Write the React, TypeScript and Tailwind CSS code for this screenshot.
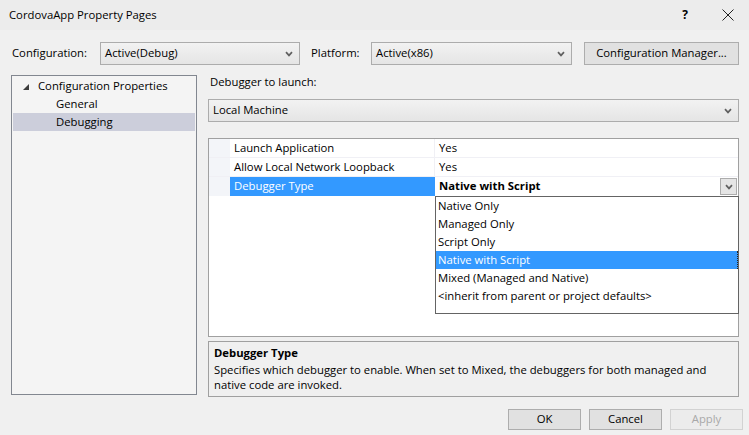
import React from 'react';

const font = { fontFamily: '"Open Sans", "Noto Sans", sans-serif' };

function Chevron({ color = '#606060' }: { color?: string }) {
    return (
        <svg width="8" height="6" viewBox="0 0 8 6">
            <path d="M1 1.2 L4 4.4 L7 1.2" fill="none" stroke={color} strokeWidth="1.7" />
        </svg>
    );
}

function Combo({ value, width }: { value: string; width: string }) {
    return (
        <div
            className={`${width} h-[23px] flex items-center justify-between pl-[4px] pr-[6px] border border-[#acacac] bg-gradient-to-b from-[#f2f2f2] to-[#e5e5e5]`}
        >
            <span>{value}</span>
            <Chevron />
        </div>
    );
}

function Button({ label, disabled = false }: { label: string; disabled?: boolean }) {
    return (
        <div
            className={
                disabled
                    ? 'w-[73px] h-[21px] flex items-center justify-center border border-[#d2d2d2] bg-[#ececec] text-[#a8a8a8]'
                    : 'w-[73px] h-[21px] flex items-center justify-center border border-[#adadad] bg-[#e1e1e1]'
            }
        >
            {label}
        </div>
    );
}

const gridRows = [
    { name: 'Launch Application', value: 'Yes' },
    { name: 'Allow Local Network Loopback', value: 'Yes' },
];

const debuggerOptions = [
    'Native Only',
    'Managed Only',
    'Script Only',
    'Native with Script',
    'Mixed (Managed and Native)',
    '<inherit from parent or project defaults>',
];

export default function App() {
    return (
        <div className="w-[749px] h-[435px] bg-[#f0f0f0] text-[11.3px] text-black flex flex-col overflow-hidden" style={font}>
            {/* Title bar */}
            <div className="h-[30px] bg-[#ececec] flex items-center justify-between pl-[9px]">
                <span>CordovaApp Property Pages</span>
                <div className="flex items-center">
                    <span className="font-bold text-[12px] mr-[34px]">?</span>
                    <svg width="12" height="12" viewBox="0 0 12 12" className="mr-[15px]">
                        <path d="M0.5 0.5 L11.5 11.5 M11.5 0.5 L0.5 11.5" stroke="#222" strokeWidth="1" />
                    </svg>
                </div>
            </div>

            {/* Configuration / platform row */}
            <div className="flex items-center mt-[12px] pl-[12px] h-[23px]">
                <span className="w-[88px]">Configuration:</span>
                <Combo value="Active(Debug)" width="w-[200px]" />
                <span className="ml-[11px] w-[60px]">Platform:</span>
                <Combo value="Active(x86)" width="w-[201px]" />
                <div className="ml-[12px] w-[155px] h-[23px] flex items-center justify-center border border-[#adadad] bg-[#e1e1e1]">
                    Configuration Manager...
                </div>
            </div>

            {/* Main */}
            <div className="flex mt-[10px] pl-[11px]">
                {/* Tree */}
                <div className="w-[186px] h-[320px] border border-[#828790] bg-[#f4f4f4] pt-[1px] px-[1px]">
                    <div className="h-[18px] flex items-center">
                        <svg width="6" height="6" viewBox="0 0 6 6" className="ml-[10px] mr-[9px] mt-[1px]">
                            <path d="M6 0 L6 6 L0 6 Z" fill="#3c3c3c" />
                        </svg>
                        <span>Configuration Properties</span>
                    </div>
                    <div className="h-[18px] flex items-center pl-[43px]">General</div>
                    <div className="h-[18px] flex items-center pl-[43px] bg-[#cccedb]">Debugging</div>
                </div>

                {/* Right column */}
                <div className="ml-[11px] w-[531px] flex flex-col">
                    <div className="h-[14px] flex items-center pl-[2px]">Debugger to launch:</div>
                    <div className="mt-[10px]">
                        <Combo value="Local Machine" width="w-[531px]" />
                    </div>

                    {/* Property grid */}
                    <div className="relative mt-[16px] h-[199px] border border-[#a0a0a0] bg-white">
                        {gridRows.map((row) => (
                            <div key={row.name} className="h-[19px] flex border-b border-[#f0f0f5]">
                                <div className="w-[21px] bg-[#f3f5f9]" />
                                <div className="w-[205px] flex items-center pl-[4px] border-r border-[#f0f0f5]">{row.name}</div>
                                <div className="flex-1 flex items-center pl-[4px]">{row.value}</div>
                            </div>
                        ))}
                        <div className="h-[19px] flex">
                            <div className="w-[21px] bg-[#f3f5f9]" />
                            <div className="w-[205px] flex items-center pl-[4px] bg-[#3399ff] text-white">Debugger Type</div>
                            <div className="flex-1 flex items-center justify-between pl-[4px] pr-[1px]">
                                <span className="font-bold">Native with Script</span>
                                <div className="w-[17px] h-[17px] flex items-center justify-center border border-[#acacac] bg-[#e5e5e5]">
                                    <Chevron />
                                </div>
                            </div>
                        </div>

                        {/* Open dropdown list */}
                        <div className="absolute left-[226px] top-[57px] w-[304px] h-[118px] border border-[#646464] bg-white">
                            {debuggerOptions.map((opt) => (
                                <div
                                    key={opt}
                                    className={
                                        opt === 'Native with Script'
                                            ? 'h-[18px] flex items-center pl-[2px] bg-[#3399ff] text-white border-r border-dotted border-[#222]'
                                            : 'h-[18px] flex items-center pl-[2px]'
                                    }
                                >
                                    {opt}
                                </div>
                            ))}
                        </div>
                    </div>

                    {/* Description */}
                    <div className="mt-[4px] h-[56px] border border-[#a0a0a0] bg-[#f0f0f0] px-[5px] pt-[3px] leading-[15px]">
                        <div className="font-bold h-[17px]">Debugger Type</div>
                        <div>
                            Specifies which debugger to enable. When set to Mixed, the debuggers for both managed and
                            <br />
                            native code are invoked.
                        </div>
                    </div>
                </div>
            </div>

            {/* Buttons */}
            <div className="flex justify-end gap-[8px] pr-[6px] mt-[12px]">
                <Button label="OK" />
                <Button label="Cancel" />
                <Button label="Apply" disabled />
            </div>
        </div>
    );
}
